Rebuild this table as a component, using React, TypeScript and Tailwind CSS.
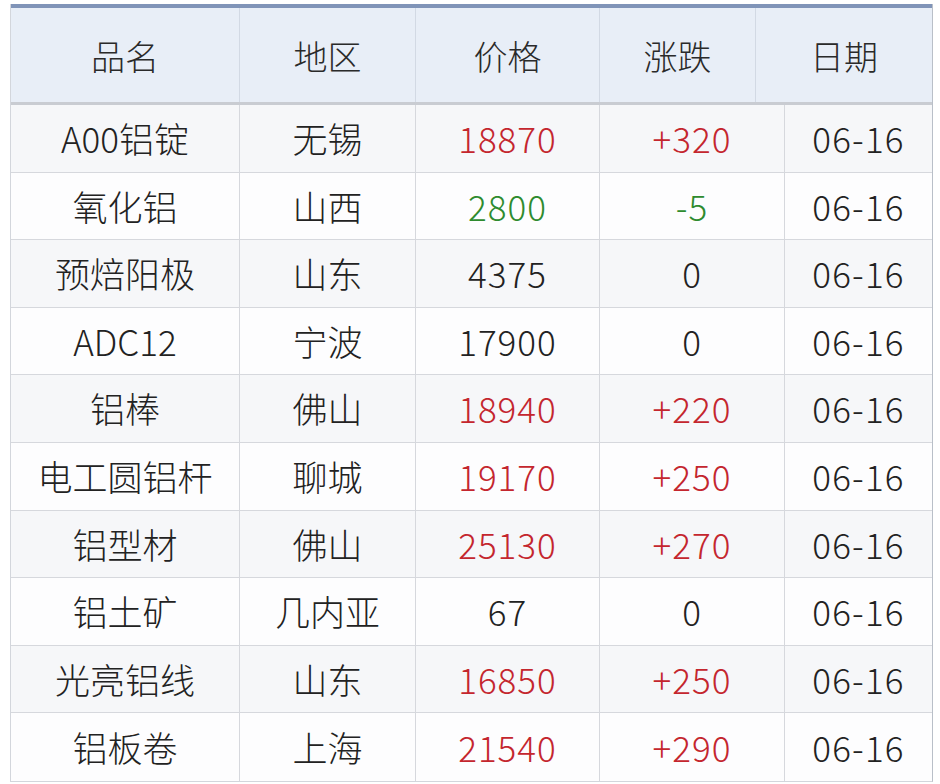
import React from 'react'

type Row = {
  name: string
  area: string
  price: string
  change: string
  date: string
  tone: 'up' | 'down' | 'flat'
}

const rows: Row[] = [
  { name: 'A00铝锭', area: '无锡', price: '18870', change: '+320', date: '06-16', tone: 'up' },
  { name: '氧化铝', area: '山西', price: '2800', change: '-5', date: '06-16', tone: 'down' },
  { name: '预焙阳极', area: '山东', price: '4375', change: '0', date: '06-16', tone: 'flat' },
  { name: 'ADC12', area: '宁波', price: '17900', change: '0', date: '06-16', tone: 'flat' },
  { name: '铝棒', area: '佛山', price: '18940', change: '+220', date: '06-16', tone: 'up' },
  { name: '电工圆铝杆', area: '聊城', price: '19170', change: '+250', date: '06-16', tone: 'up' },
  { name: '铝型材', area: '佛山', price: '25130', change: '+270', date: '06-16', tone: 'up' },
  { name: '铝土矿', area: '几内亚', price: '67', change: '0', date: '06-16', tone: 'flat' },
  { name: '光亮铝线', area: '山东', price: '16850', change: '+250', date: '06-16', tone: 'up' },
  { name: '铝板卷', area: '上海', price: '21540', change: '+290', date: '06-16', tone: 'up' },
]

const toneCls = {
  up: 'text-[#c4262e]',
  down: 'text-[#2e8b2e]',
  flat: 'text-[#222]',
}

export default function App() {
  return (
    <div
      className="w-[940px] h-[784px] bg-white pt-[4px] pl-[10px] overflow-hidden font-light"
      style={{ fontFamily: '"Noto Sans CJK SC", "Noto Sans", sans-serif' }}
    >
      <div className="w-[923px] border-l border-r border-b border-[#d3d6dc] border-r-[#b9bfc8]">
        {/* header */}
        <div className="flex h-[101px] bg-[#e8eef7] border-t-[4px] border-t-[#8094b8] border-b-[3px] border-b-[#c9ccd2] text-[34px] text-[#2a2a2a]">
          <div className="w-[229px] flex items-center justify-center border-r border-[#d2d9e4]">品名</div>
          <div className="w-[176px] flex items-center justify-center border-r border-[#d2d9e4]">地区</div>
          <div className="w-[184px] flex items-center justify-center border-r border-[#d2d9e4]">价格</div>
          <div className="w-[156px] flex items-center justify-center border-r border-[#d2d9e4]">涨跌</div>
          <div className="flex-1 flex items-center justify-center">日期</div>
        </div>

        {/* body */}
        {rows.map((r, i) => (
          <div
            key={r.name}
            className={`flex h-[67.6px] text-[35px] text-[#222] ${i < rows.length - 1 ? 'border-b border-[#d6d8dd]' : ''} ${i % 2 === 0 ? 'bg-[#f6f7f9]' : 'bg-[#fdfdfe]'}`}
          >
            <div className="w-[229px] flex items-center justify-center border-r border-[#d6d8dd]">{r.name}</div>
            <div className="w-[176px] flex items-center justify-center border-r border-[#d6d8dd]">{r.area}</div>
            <div className={`w-[184px] flex items-center justify-center border-r border-[#d6d8dd] tracking-[1px] ${toneCls[r.tone]}`}>{r.price}</div>
            <div className={`w-[185px] flex items-center justify-center border-r border-[#d6d8dd] tracking-[1px] ${toneCls[r.tone]}`}>{r.change}</div>
            <div className="flex-1 flex items-center justify-center tracking-[1.2px]">{r.date}</div>
          </div>
        ))}
      </div>
    </div>
  )
}
